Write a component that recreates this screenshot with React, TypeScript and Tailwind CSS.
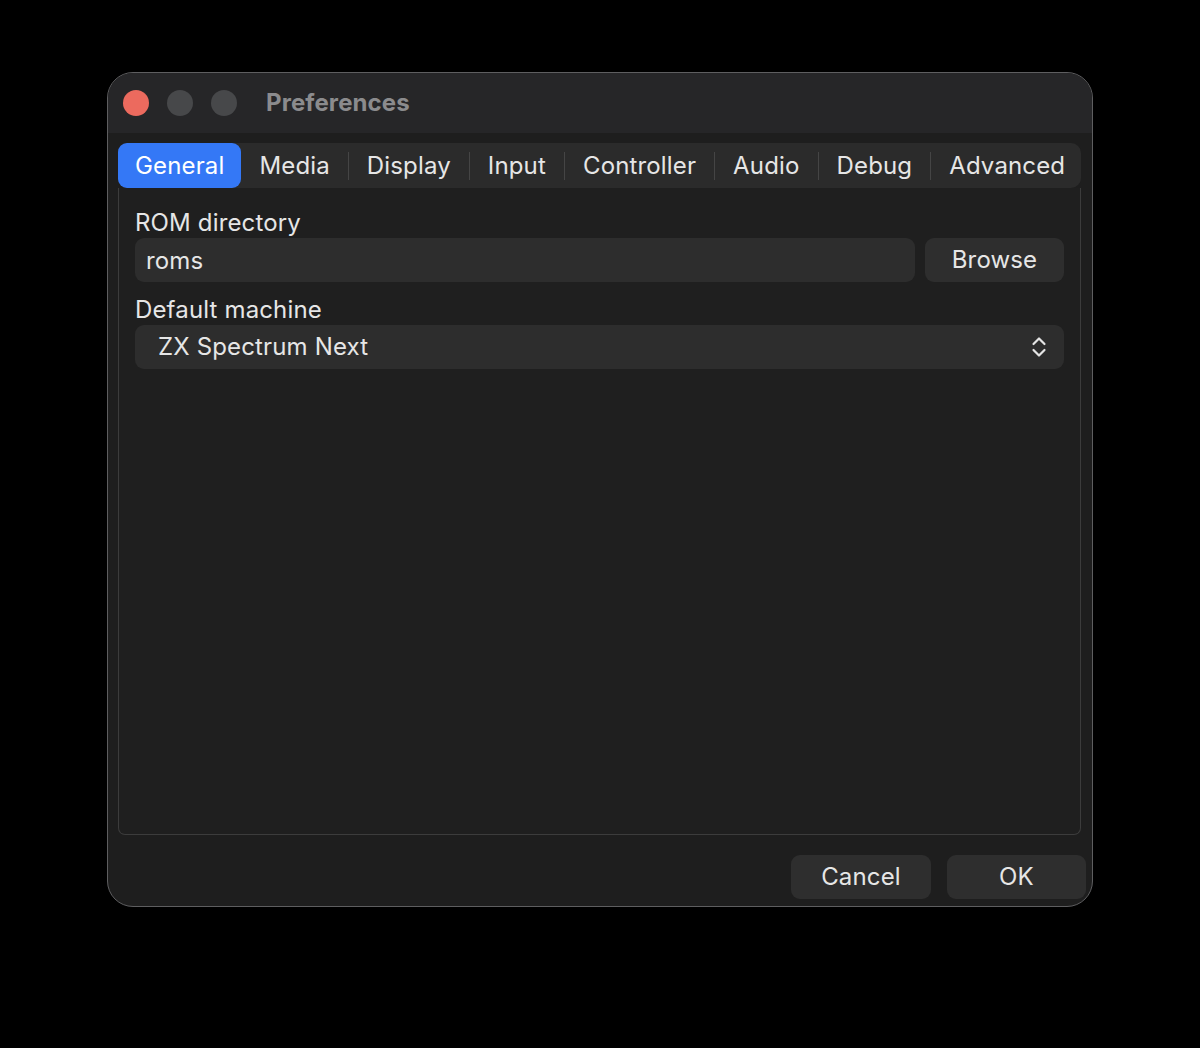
import { useState } from "react";

const TABS = ["General", "Media", "Display", "Input", "Controller", "Audio", "Debug", "Advanced"];

function UpDownChevron() {
  return (
    <svg width="16" height="24" viewBox="0 0 16 24" fill="none" aria-hidden="true">
      <path d="M2.5 9 L8 3.5 L13.5 9" stroke="#e5e5e5" strokeWidth="2.2" strokeLinecap="round" strokeLinejoin="round" />
      <path d="M2.5 15 L8 20.5 L13.5 15" stroke="#e5e5e5" strokeWidth="2.2" strokeLinecap="round" strokeLinejoin="round" />
    </svg>
  );
}

function TrafficLights() {
  return (
    <div className="flex items-center gap-[18px]">
      <span className="h-[26px] w-[26px] rounded-full bg-[#ec6a5e]" />
      <span className="h-[26px] w-[26px] rounded-full bg-[#47484a]" />
      <span className="h-[26px] w-[26px] rounded-full bg-[#47484a]" />
    </div>
  );
}

export default function App() {
  const [tab, setTab] = useState("General");
  const [romDir, setRomDir] = useState("roms");

  return (
    <div
      className="flex min-h-screen justify-center bg-black pt-[72px] text-[24px] tracking-[0.15px] text-[#e6e6e6]"
      style={{ fontFamily: "Inter, 'Noto Sans', sans-serif" }}
    >
      <div className="flex h-[835px] w-[986px] flex-col overflow-hidden rounded-[26px] border border-[#5e5e60] bg-[#1e1e1e]">
        {/* title bar */}
        <header className="flex h-[60px] shrink-0 items-center bg-[#262628] pl-[15px]">
          <TrafficLights />
          <h1 className="ml-[29px] text-[24px] font-bold tracking-[0.1px] text-[#8b8b8d]">Preferences</h1>
        </header>

        <div className="flex flex-1 flex-col pl-[10px] pr-[6px] pt-[10px]">
          {/* tab strip */}
          <nav className="mr-[5px] flex h-[45px] items-center rounded-[10px] bg-[#2b2b2b]">
            {TABS.map((name, i) => {
              const active = name === tab;
              const prevActive = i > 0 && TABS[i - 1] === tab;
              return (
                <div key={name} className="flex h-full items-center">
                  {i > 0 && !active && !prevActive ? (
                    <span className="h-[28px] w-px bg-[#454545]" />
                  ) : null}
                  <button
                    type="button"
                    onClick={() => setTab(name)}
                    className={
                      active
                        ? "h-full rounded-[9px] bg-[#3478f6] px-[17px] text-white"
                        : "h-full px-[18px] text-[#e6e6e6]"
                    }
                  >
                    {name}
                  </button>
                </div>
              );
            })}
          </nav>

          {/* page */}
          <section className="mr-[5px] flex flex-1 flex-col rounded-b-[7px] border-x border-b border-[#3c3c3c] bg-[#1f1f1f] px-4 pt-[21px]">
            <label className="leading-[28px]">ROM directory</label>
            <div className="mt-[1px] flex gap-[10px]">
              <input
                value={romDir}
                onChange={(e) => setRomDir(e.target.value)}
                className="h-[44px] flex-1 rounded-[9px] bg-[#2d2d2d] px-[11px] text-[#e6e6e6] outline-none"
              />
              <button type="button" className="h-[44px] w-[139px] rounded-[9px] bg-[#2e2e2e]">
                Browse
              </button>
            </div>

            <label className="mt-[14px] leading-[28px]">Default machine</label>
            <button
              type="button"
              className="mt-[1px] flex h-[44px] items-center justify-between rounded-[9px] bg-[#2d2d2d] pl-[23px] pr-[17px]"
            >
              <span>ZX Spectrum Next</span>
              <UpDownChevron />
            </button>
          </section>

          {/* footer */}
          <footer className="flex justify-end gap-4 pb-[7px] pt-[20px]">
            <button type="button" className="h-[44px] w-[140px] rounded-[9px] bg-[#2e2e2e]">
              Cancel
            </button>
            <button type="button" className="h-[44px] w-[139px] rounded-[9px] bg-[#2e2e2e]">
              OK
            </button>
          </footer>
        </div>
      </div>
    </div>
  );
}
